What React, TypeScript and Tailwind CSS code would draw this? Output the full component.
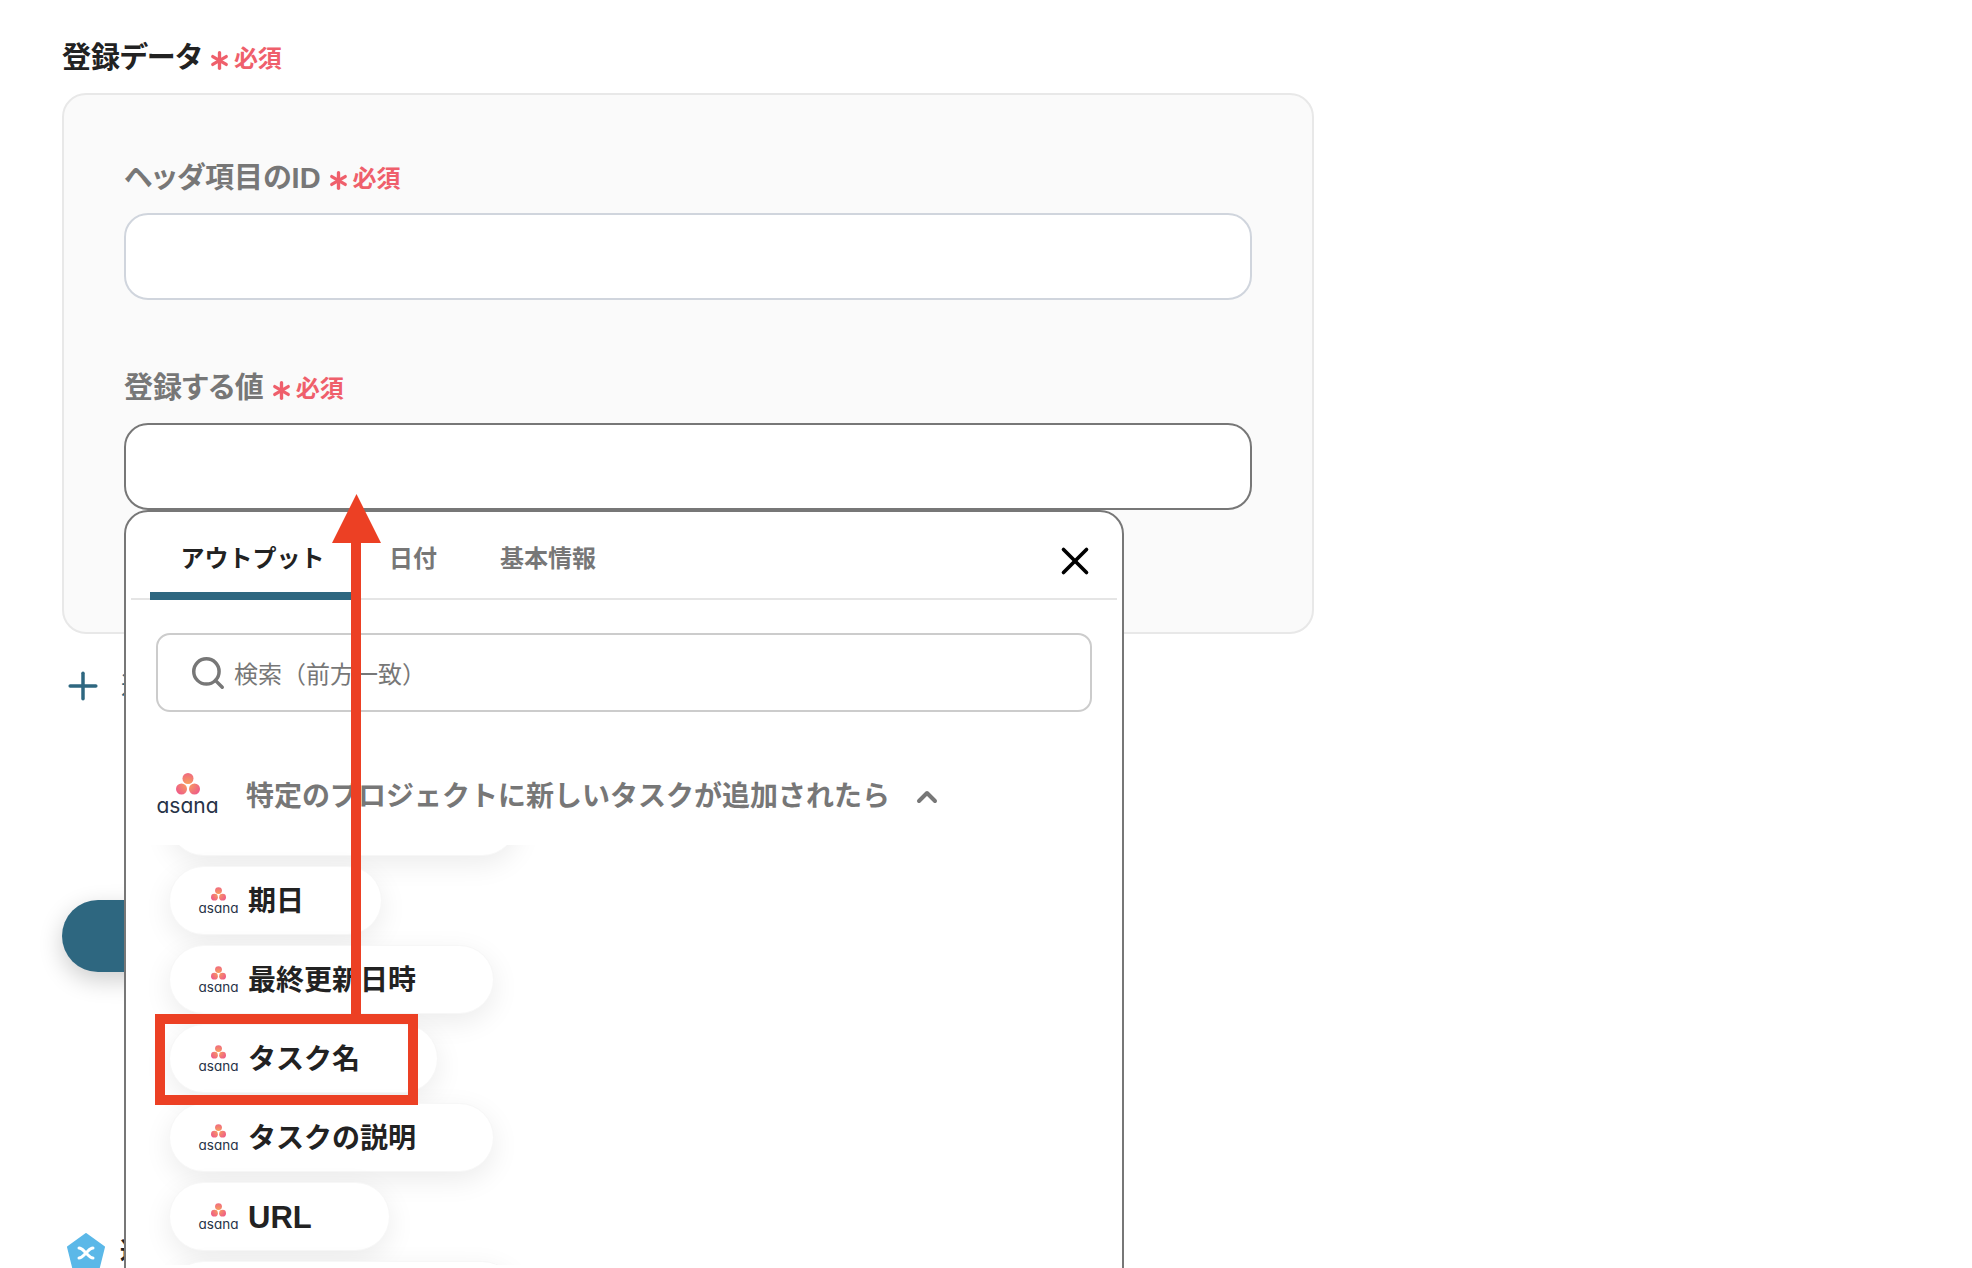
import { ChevronUp, Plus, Search, X, Asterisk } from "lucide-react";

function Required() {
    return (
        <span className="ml-[2px] flex items-center text-[24px] font-bold text-[#ef5f6b]">
            <Asterisk size={31} strokeWidth={2.6} className="mt-[4px]" />
            <span className="ml-[-1px] mt-[1px]">必須</span>
        </span>
    );
}

function AsanaLogo({ large }: { large?: boolean }) {
    return (
        <div className={large ? "flex w-[61px] shrink-0 flex-col items-center" : "flex w-[39px] shrink-0 flex-col items-center"}>
            <svg viewBox="0 0 24 22" className={large ? "h-[22px] w-[24px]" : "h-[14px] w-[15px]"}>
                <defs>
                    <radialGradient id="asana-dots" gradientUnits="userSpaceOnUse" cx="12" cy="11" r="13">
                        <stop offset="0" stopColor="#f8a35a" />
                        <stop offset="1" stopColor="#ef5f86" />
                    </radialGradient>
                </defs>
                <circle cx="12" cy="5.5" r="5.5" fill="url(#asana-dots)" />
                <circle cx="5.5" cy="16" r="5.5" fill="url(#asana-dots)" />
                <circle cx="18.5" cy="16" r="5.5" fill="url(#asana-dots)" />
            </svg>
            <span
                className={
                    large
                        ? "[font-family:Inter,sans-serif] [font-feature-settings:'cv11'] text-[21px] leading-[22px] text-[#273347]"
                        : "[font-family:Inter,sans-serif] [font-feature-settings:'cv11'] text-[13.5px] leading-[14px] text-[#273347]"
                }
            >
                asana
            </span>
        </div>
    );
}

const fields = ["期日", "最終更新日時", "タスク名", "タスクの説明", "URL"];

export default function App() {
    return (
        <div className="relative h-[1268px] overflow-hidden bg-white pl-[62px] pt-[37px] [font-family:'Liberation_Sans','Noto_Sans_CJK_JP',sans-serif] [font-feature-settings:'palt']">
            <div className="flex h-[40px] items-center pt-[3px] text-[29px] font-bold text-[#222222]">
                登録データ
                <Required />
            </div>

            <div className="mt-[16px] w-[1252px] rounded-[24px] border-2 border-[#e8e8e8] bg-[#fafafa] px-[60px] pb-[122px] pt-[62px]">
                <div className="flex h-[40px] items-center pt-[3px] text-[29px] font-bold text-[#777777]">
                    ヘッダ項目のID
                    <Required />
                </div>
                <div className="mt-[16px] h-[87px] rounded-[24px] border-2 border-[#d0d5dd] bg-white" />

                <div className="mt-[67px] flex h-[40px] items-center pt-[3px] text-[29px] font-bold text-[#777777]">
                    登録する値
                    <Required />
                </div>
                <div className="relative mt-[16px] h-[87px] rounded-[24px] border-2 border-[#777777] bg-white">
                    {/* Output picker */}
                    <div className="absolute left-[-2px] top-[85px] z-10 h-[800px] w-[1000px] rounded-t-[24px] border-2 border-[#777777] bg-white">
                        <div className="relative mx-[5px] flex h-[88px] border-b-2 border-[#e5e5e5] text-[24px] font-bold text-[#777777] [font-feature-settings:normal]">
                            <div className="ml-[19px] flex h-[88px] w-[205px] items-center justify-center rounded-tl-[8px] border-b-[8px] border-[#2e6780] pt-[14px] text-[#222222]">
                                アウトプット
                            </div>
                            <div className="ml-[34px] flex h-[88px] items-center pt-[6px]">日付</div>
                            <div className="ml-[63px] flex h-[88px] items-center pt-[6px]">基本情報</div>
                            <X size={46} strokeWidth={1.9} className="absolute right-[19px] top-[26px] text-black" />
                        </div>

                        <div className="px-[30px]">
                            <div className="mt-[33px] flex h-[79px] items-center rounded-[14px] border-2 border-[#cccccc] pl-[31px] text-[24px] text-[#777777]">
                                <Search size={38} strokeWidth={2.2} className="shrink-0" />
                                <span className="ml-[7px] mt-[4px] [font-feature-settings:normal]">検索（前方一致）</span>
                            </div>

                            <div className="mt-[61px] flex h-[44px] items-center pl-[1px]">
                                <AsanaLogo large />
                                <span className="ml-[28px] pt-[3px] text-[28px] font-bold text-[#777777] [font-feature-settings:normal]">特定のプロジェクトに新しいタスクが追加されたら</span>
                                <ChevronUp size={32} strokeWidth={3} className="ml-[21px] mt-[3px] text-[#777777]" />
                            </div>
                        </div>

                        <div className="mt-[28px] h-[420px] overflow-hidden pl-[43px]">
                            <div className="-mt-[58px] flex flex-col items-start gap-[10px]">
                                <div className="h-[69px] w-[348px] rounded-full border border-[#f7f7f7] bg-white shadow-[0_8px_28px_rgba(0,0,0,0.08)]" />
                                {fields.map((field) => (
                                    <div
                                        key={field}
                                        className="flex h-[69px] items-center rounded-full border border-[#f7f7f7] bg-white pl-[29px] pr-[77px] shadow-[0_8px_28px_rgba(0,0,0,0.08)]"
                                    >
                                        <AsanaLogo />
                                        <span
                                            className={
                                                field === "URL"
                                                    ? "ml-[10px] mt-[3px] text-[31px] font-bold text-[#222222] [font-feature-settings:normal]"
                                                    : "ml-[10px] mt-[3px] text-[28px] font-bold text-[#222222] [font-feature-settings:normal]"
                                            }
                                        >
                                            {field}
                                        </span>
                                    </div>
                                ))}
                                <div className="h-[69px] w-[348px] rounded-full border border-[#f7f7f7] bg-white shadow-[0_8px_28px_rgba(0,0,0,0.08)]" />
                            </div>
                        </div>
                    </div>
                </div>
            </div>

            {/* Behind the picker */}
            <div className="ml-[-1px] mt-[28px] flex h-[48px] items-center gap-[16px] text-[24px] text-[#2e6780]">
                <Plus size={44} strokeWidth={1.9} />
                追加
            </div>
            <div className="mt-[190px] h-[72px] w-[300px] rounded-full bg-[#2e6780] shadow-[0_8px_24px_rgba(0,0,0,0.2)]" />
            <div className="ml-[4px] mt-[261px] flex items-start gap-[14px] text-[24px] font-bold text-[#222222]">
                <svg viewBox="0 0 40 40" className="h-[40px] w-[40px]">
                    <path d="M20 1 38 14 32 38H8L2 14Z" fill="#5bb8e8" stroke="#5bb8e8" strokeWidth="2" strokeLinejoin="round" />
                    <path d="M13 15c3 0 4 2 7 5s4 5 7 5M27 15c-3 0-4 2-7 5s-4 5-7 5" fill="none" stroke="#fff" strokeWidth="3" strokeLinecap="round" />
                </svg>
                連携
            </div>

            {/* Annotation: red arrow and box */}
            <svg viewBox="0 0 50 520" className="absolute left-[332px] top-[494px] z-20 h-[520px] w-[50px]">
                <polygon points="24.5,0 49,49 0,49" fill="#ec4024" />
                <rect x="19" y="48" width="10" height="472" fill="#ec4024" />
            </svg>
            <div className="absolute left-[155px] top-[1014px] z-20 h-[91px] w-[263px] border-[10px] border-[#ec4024]" />
        </div>
    );
}
